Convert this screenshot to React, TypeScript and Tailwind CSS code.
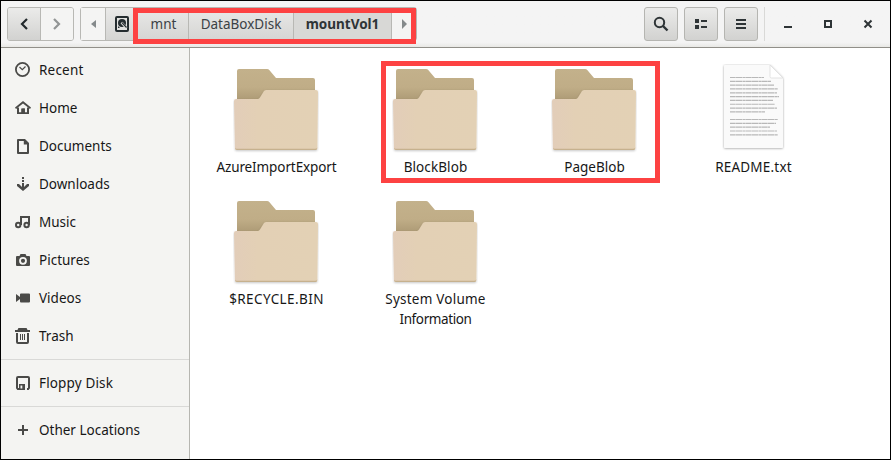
import type { ReactNode } from "react";

const ink = "#4a4a48";

const icons: Record<string, ReactNode> = {
  recent: (
    <g fill="none" stroke={ink}>
      <circle cx="7.5" cy="7.5" r="6.6" strokeWidth="1.8" />
      <path d="M4.500 5L7.300 7.700L10.500 4.500" strokeWidth="1.2" />
    </g>
  ),
  home: (
    <g fill={ink}>
      <path d="M8 1L16 7.6L15 9L8 3.4L1 9L0 7.6Z" />
      <path d="M2 7.5H4V12.3H6.2V8.5H9.8V12.3H12V7.5H14V14H2Z" />
      <path d="M7.3 8.5h2.5v4.5H7.3z" />
    </g>
  ),
  documents: (
    <path fill={ink} fillRule="evenodd" d="M3 1H10L14 5V15Q14 16 13 16H3Q2 16 2 15V2Q2 1 3 1ZM4 3V14H12V6.4H8.8V3Z" />
  ),
  downloads: (
    <g fill={ink}>
      <path d="M7 1h2v2H7zM7 4h2v2H7zM7 7h2v5H7z" />
      <path d="M2 8H4L8 12L12 8H14V10L8 15L2 10Z" />
    </g>
  ),
  music: (
    <g fill="none" stroke={ink} strokeWidth="2">
      <circle cx="3.2" cy="11" r="2.2" />
      <circle cx="11.6" cy="11" r="2.2" />
      <path d="M6 11V3H14V11" />
    </g>
  ),
  pictures: (
    <g>
      <path fill={ink} d="M2 4H4.5L5.5 2H10.5L11.5 4H14Q15 4 15 5V13Q15 14 14 14H2Q1 14 1 13V5Q1 4 2 4Z" />
      <circle cx="8" cy="8.8" r="3" fill="none" stroke="#f4f4f2" strokeWidth="1.8" />
    </g>
  ),
  videos: (
    <path fill={ink} d="M1 4L5 7V4.5Q5 3.5 6 3.5H14Q15 3.5 15 4.5V11.5Q15 12.5 14 12.5H6Q5 12.5 5 11.5V9L1 12Z" />
  ),
  trash: (
    <g fill="none" stroke={ink}>
      <path d="M0 3H15M3 3L4 1H11L12 3" strokeWidth="1.8" />
      <path d="M2 5V14Q2 15 3 15H12Q13 15 13 14V5" strokeWidth="2" />
      <path d="M5.5 6V12M7.5 6V12M9.5 6V12" strokeWidth="1" />
    </g>
  ),
  floppy: (
    <g>
      <path d="M4 14H2.8L2 13V3Q2 2 3 2H13Q14 2 14 3V13L13.2 14H12" fill="none" stroke={ink} strokeWidth="2" />
      <path fill={ink} fillRule="evenodd" d="M4 9H10V15H4ZM5.500 10.500V13.500H7.300V10.500Z" />
    </g>
  ),
  plus: <path fill={ink} d="M7 3h2v4h4v2H9v4H7V9H3V7h4z" />,
};

function Place({ icon, label, tracking = "" }: { icon: string; label: string; tracking?: string }) {
  return (
    <div className="flex h-[38px] shrink-0 items-center gap-2 pl-[14px]">
      <svg className="size-4 shrink-0 overflow-visible" viewBox="0 0 16 16">{icons[icon]}</svg>
      <span className={`whitespace-nowrap ${tracking}`}>{label}</span>
    </div>
  );
}

function Folder() {
  return (
    <svg className="-ml-px block h-[86px] w-[86px]" viewBox="0 0 86 86">
      <defs>
        <linearGradient id="folderBack" x1="0" y1="0" x2="0" y2="1">
          <stop offset="0" stopColor="#c3b18b" />
          <stop offset="0.55" stopColor="#c0ad87" />
          <stop offset="1" stopColor="#aa9873" />
        </linearGradient>
        <linearGradient id="folderFront" x1="0" y1="0" x2="1" y2="0">
          <stop offset="0" stopColor="#e2cdb9" />
          <stop offset="0.28" stopColor="#e3d0b5" />
          <stop offset="1" stopColor="#e3d1b5" />
        </linearGradient>
        <filter id="folderShadow" x="-10%" y="-10%" width="120%" height="125%">
          <feDropShadow dx="0" dy="1" stdDeviation="1" floodColor="#000" floodOpacity="0.22" />
        </filter>
      </defs>
      <path fill="url(#folderBack)" d="M4 35V4Q4 2 6 2H34Q35.500 2 36.500 3.200L43 11H80Q82 11 82 13V35Z" />
      <g filter="url(#folderShadow)">
        <path fill="url(#folderFront)" d="M1 34Q1 32 3 32H24.500Q26 32 27 30.500L31 24Q32 23 33.500 23H83Q85 23 85 25L84.400 81Q84.400 83 82.400 83H4Q2 83 1.900 81Z" />
        <path fill="#c6b18e" d="M1.900 80.500Q2 83 4 83H82.400Q84.400 83 84.400 80.500Q84 81.800 82 81.800H4Q2.300 81.800 1.900 80.500Z" />
      </g>
    </svg>
  );
}

const textLines = [34, 41, 44, 48, 47, 49, 43, 45, 47, 35, 0, 48, 46, 40, 47, 48];

function TextFile() {
  return (
    <svg className="block h-[90px] w-[64px]" viewBox="0 0 64 90">
      <defs>
        <filter id="paperShadow" x="-10%" y="-10%" width="120%" height="120%">
          <feDropShadow dx="0" dy="0.500" stdDeviation="0.9" floodColor="#000" floodOpacity="0.38" />
        </filter>
      </defs>
      <path filter="url(#paperShadow)" fill="#fafafa" d="M3 1H48L61 14V83Q61 84 60 84H3Q2 84 2 83V2Q2 1 3 1Z" />
      <path fill="#fff" stroke="#dcdcdc" strokeWidth="0.8" d="M48 1V12.500Q48 14 49.500 14H61Z" />
      {textLines.map((width, i) => (
        <path key={i} d={`M8 ${13.500 + i * 3.820}h${width}`} stroke="#b8b8b8" strokeWidth="1.200" strokeDasharray="5 0.3 7 0.4 3 0.3" />
      ))}
    </svg>
  );
}

function Entry({ file = false, children }: { file?: boolean; children: ReactNode }) {
  return (
    <div className="flex h-[132px] flex-col items-center">
      <div className="flex h-[90px] items-start justify-center">
        {file ? <div className="-mt-[3px] h-[86px]"><TextFile /></div> : <Folder />}
      </div>
      <div className="whitespace-nowrap text-center leading-5">{children}</div>
    </div>
  );
}

const button = "flex h-[34px] w-[34px] items-center justify-center rounded-[3px] border border-[#b5b5b1] bg-linear-to-b from-[#ebebea] to-[#d2d2d0]";

export default function App() {
  return (
    <div className="relative flex h-[460px] w-[891px] flex-col overflow-hidden border border-black bg-white text-[13.5px] text-[#171717] [font-family:'Noto_Sans','Open_Sans',sans-serif]">
      <header className="flex h-[47px] shrink-0 items-start border-b border-[#918f89] bg-linear-to-b from-[#f4f4f4] from-90% to-[#e8e8e5] pl-[6px] pt-[6px] text-[#3b4145]">
        <div className="flex h-[34px] w-[67px] overflow-hidden rounded-[3px] border border-[#b8b8b4]">
          <div className="flex w-[33px] items-center justify-center border-r border-[#b8b8b4] bg-linear-to-b from-[#ebebea] to-[#d2d2d0]">
            <svg className="size-4" viewBox="0 0 16 16"><path d="M11 3L6 8L11 13" fill="none" stroke="#22292c" strokeWidth="2.200" /></svg>
          </div>
          <div className="flex flex-1 items-center justify-center bg-[#f4f4f3]">
            <svg className="size-4" viewBox="0 0 16 16"><path d="M5 3L10 8L5 13" fill="none" stroke="#929595" strokeWidth="2.200" /></svg>
          </div>
        </div>
        <nav className="relative ml-[6px] flex h-[34px] w-[337px] rounded-[3px] border border-[#b8b8b4] bg-linear-to-b from-[#e9e9e8] to-[#d5d5d3]">
          <div className="flex w-[25px] items-center justify-center border-r border-[#b8b8b4] bg-[#f4f4f3]">
            <svg className="h-2 w-[5px]" viewBox="0 0 5 8"><path d="M5 0V8L0 4Z" fill="#858a8b" /></svg>
          </div>
          <div className="flex w-[32px] items-center justify-center">
            <svg className="size-4" viewBox="0 0 16 16">
              <rect x="2" y="1" width="12" height="14" rx="1" fill="#e2e2e0" stroke="#252d30" strokeWidth="2" />
              <circle cx="8" cy="7" r="4" fill="#252d30" />
              <path d="M7.500 6.500L12.500 12" stroke="#e2e2e0" strokeWidth="2.600" />
              <path d="M8 6.700L12.500 11.500" stroke="#252d30" strokeWidth="1.200" />
              <path d="M4 10L6 12H4Z" fill="#252d30" />
            </svg>
          </div>
          <div className="flex w-[51px] items-center justify-center border-r border-[#b8b8b4] pl-px">mnt</div>
          <div className="flex w-[105px] items-center justify-center border-r border-[#b8b8b4]">DataBoxDisk</div>
          <div className="flex w-[98px] items-center justify-center border-r border-[#b8b8b4] bg-[#d8d8d6] font-bold text-[#2e3436]">mountVol1</div>
          <div className="flex flex-1 items-center justify-center bg-[#f4f4f3] pl-px">
            <svg className="h-[10px] w-[5px]" viewBox="0 0 5 10"><path d="M0 0V10L5 5Z" fill="#858a8b" /></svg>
          </div>
          <div className="absolute right-0 top-0 h-[36px] w-[283px] border-[5px] border-[#fd4242]" />
        </nav>
        <div className="ml-[227px] flex gap-[6px]">
          <div className={button}>
            <svg className="size-4" viewBox="0 0 16 16"><circle cx="6.500" cy="6.500" r="4.700" fill="none" stroke="#2e3436" strokeWidth="2" /><path d="M10 10L14.500 14.500" stroke="#2e3436" strokeWidth="2.400" /></svg>
          </div>
          <div className={button}>
            <svg className="size-4" viewBox="0 0 16 16"><path fill="#2e3436" d="M2 3h4v4H2zM2 9h4v4H2zM8 4h6v2H8zM8 10h6v2H8z" /></svg>
          </div>
          <div className={button}>
            <svg className="size-4" viewBox="0 0 16 16"><path fill="#2e3436" d="M3 3h10v2H3zM3 7h10v2H3zM3 11h10v2H3z" /></svg>
          </div>
        </div>
        <div className="ml-[6px] h-[34px] w-px bg-[#d9d9d7]" />
        <div className="ml-[15px] flex h-[34px] items-center gap-6">
          <svg className="size-4" viewBox="0 0 16 16"><path fill="#2e3436" d="M4 10h8v2H4z" /></svg>
          <svg className="size-4" viewBox="0 0 16 16"><path d="M5 5h6v6H5z" fill="none" stroke="#2e3436" strokeWidth="2" /></svg>
          <svg className="size-4" viewBox="0 0 16 16"><path d="M4.500 4.500L11.500 11.500M11.500 4.500L4.500 11.500" stroke="#2e3436" strokeWidth="2" /></svg>
        </div>
      </header>
      <div className="flex min-h-0 flex-1">
        <aside className="flex w-[189px] shrink-0 flex-col border-r border-[#b6b6b1] bg-[#f4f4f2] pt-[3px]">
          <Place icon="recent" label="Recent" tracking="tracking-[0.2px]" />
          <Place icon="home" label="Home" />
          <Place icon="documents" label="Documents" />
          <Place icon="downloads" label="Downloads" />
          <Place icon="music" label="Music" />
          <Place icon="pictures" label="Pictures" />
          <Place icon="videos" label="Videos" />
          <Place icon="trash" label="Trash" />
          <div className="mb-1 mt-1 h-px shrink-0 bg-[#d9d9d7]" />
          <Place icon="floppy" label="Floppy Disk" tracking="tracking-[0.15px]" />
          <div className="mb-1 mt-1 h-px shrink-0 bg-[#d9d9d7]" />
          <Place icon="plus" label="Other Locations" />
        </aside>
        <main className="grid flex-1 auto-rows-[132px] grid-cols-[repeat(4,159px)] content-start pl-[7px] pt-[19px]">
          <Entry><span className="tracking-[-0.1px]">AzureImportExport</span></Entry>
          <Entry><span className="tracking-[0.1px]">BlockBlob</span></Entry>
          <Entry>PageBlob</Entry>
          <Entry file><span className="tracking-[0.2px]">README.txt</span></Entry>
          <Entry><span className="tracking-[0.4px]">$RECYCLE.BIN</span></Entry>
          <Entry><span className="tracking-[0.23px]">System Volume</span><br /><span className="tracking-[-0.4px]">Information</span></Entry>
        </main>
      </div>
      <div className="absolute left-[380px] top-[60px] h-[122px] w-[279px] border-[5px] border-[#fd4242]" />
    </div>
  );
}
